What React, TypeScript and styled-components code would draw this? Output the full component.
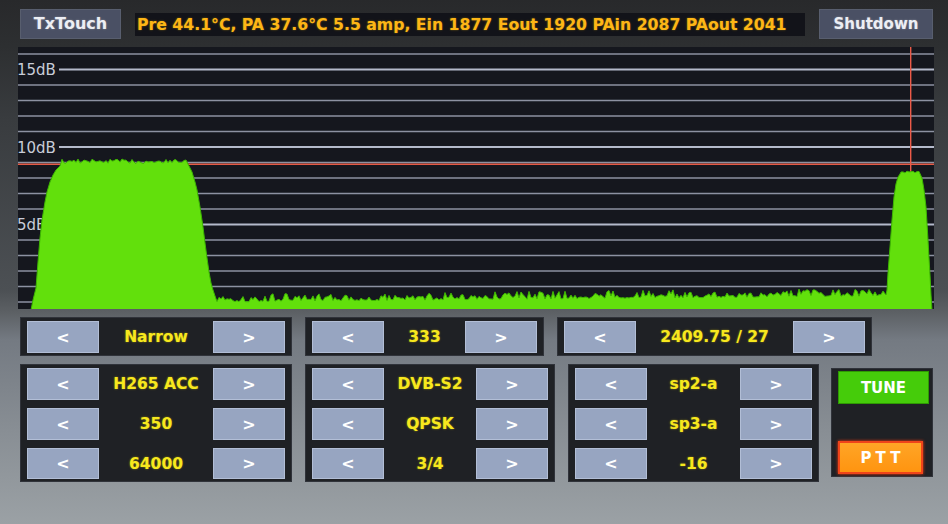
import React from 'react';
import styled, { createGlobalStyle } from 'styled-components';

const Global = createGlobalStyle`
  html, body { margin: 0; padding: 0; background: #2a2b2d; }
  #root { width: 948px; height: 524px; }
`;

const Screen = styled.div`
  width: 948px;
  height: 524px;
  overflow: hidden;
  display: flex;
  flex-direction: column;
  font-family: "DejaVu Sans", "Liberation Sans", sans-serif;
  background: linear-gradient(
    180deg,
    #28292b 0px,
    #2d2f31 46px,
    #393c3f 120px,
    #4c5054 290px,
    #5c6064 312px,
    #747a82 340px,
    #888e94 430px,
    #9ba1a5 524px
  );
`;

const TopBar = styled.div`
  height: 47px;
  display: flex;
  align-items: center;
  padding: 0 15px 0 20px;
  box-sizing: border-box;
`;

const HeaderButton = styled.div<{ $w: number; $fs: number }>`
  width: ${(p) => p.$w}px;
  height: 30px;
  box-sizing: border-box;
  display: flex;
  align-items: center;
  justify-content: center;
  background: #4a5064;
  border: 1px solid #585e6e;
  color: #eceef4;
  font-weight: bold;
  font-size: ${(p) => p.$fs}px;
  text-shadow: 0 0 2px rgba(255, 255, 255, 0.35);
`;

const Status = styled.div`
  width: 670px;
  height: 23px;
  margin: 2px 14px 0 14px;
  box-sizing: border-box;
  padding-left: 2px;
  display: flex;
  align-items: center;
  background: #121319;
  color: #fdb616;
  font-weight: bold;
  font-size: 15.7px;
  white-space: nowrap;
  text-shadow: 0 0 2px rgba(255, 200, 0, 0.45);
`;

const ChartBox = styled.div`
  margin: 0 14px 0 18px;
  height: 262px;
  background: #15171e;
  flex-shrink: 0;
`;

const Controls = styled.div`
  display: flex;
  flex-direction: column;
  gap: 8px;
  padding: 8px 0 0 20px;
`;

const Row = styled.div`
  display: flex;
  gap: 13px;
  align-items: flex-start;
`;

const Panel = styled.div<{ $w: number }>`
  width: ${(p) => p.$w}px;
  box-sizing: border-box;
  background: #1f2125;
  border: 1px solid #30333a;
  display: flex;
  flex-direction: column;
  gap: 8px;
  padding: 3px 6px 2px 6px;
`;

const ControlRow = styled.div<{ $h: number }>`
  display: grid;
  grid-template-columns: 72px 1fr 72px;
  height: ${(p) => p.$h}px;
`;

const ArrowButton = styled.div`
  box-sizing: border-box;
  display: flex;
  align-items: center;
  justify-content: center;
  background: #97a5c1;
  border: 1px solid #b2bed6;
  color: #ffffff;
  font-weight: bold;
  font-size: 16px;
`;

const Value = styled.div`
  display: flex;
  align-items: center;
  justify-content: center;
  color: #f7e81e;
  font-weight: bold;
  font-size: 15.5px;
  white-space: nowrap;
  text-shadow: 0 0 2px rgba(255, 235, 0, 0.5);
`;

const ActionPanel = styled.div`
  width: 102px;
  height: 109px;
  margin-top: 4px;
  margin-left: -1px;
  box-sizing: border-box;
  background: #1f2125;
  border: 1px solid #30333a;
  display: flex;
  flex-direction: column;
  justify-content: space-between;
  padding: 2px 4px 2px 6px;
`;

const TuneButton = styled.div`
  width: 91px;
  height: 33px;
  box-sizing: border-box;
  display: flex;
  align-items: center;
  justify-content: center;
  background: #45cc0a;
  border: 1px solid #2e9a02;
  color: #ffffff;
  font-weight: bold;
  font-size: 15px;
`;

const PttButton = styled.div`
  width: 85px;
  height: 33px;
  box-sizing: border-box;
  display: flex;
  align-items: center;
  justify-content: center;
  background: linear-gradient(180deg, #ffa526 0%, #ff9410 100%);
  border: 2px solid #f0441a;
  box-shadow: 0 0 3px #ff3a10;
  color: #ffffff;
  font-weight: bold;
  font-size: 15px;
  letter-spacing: 4px;
  padding-left: 4px;
`;

const rand = (i: number) => {
  const s = Math.sin(i * 12.9898 + 78.233) * 43758.5453;
  return s - Math.floor(s);
};

const OX = 18;
const OY = 47;

function buildSpectrum(): string {
  const pts: [number, number][] = [];
  pts.push([31, 310], [33, 300], [36, 288], [38, 262], [40, 238], [42, 220], [45, 202], [47, 192], [50, 182], [53, 175], [56, 170], [60, 166]);
  for (let x = 62; x <= 186; x += 2) {
    pts.push([x, 163.5 - rand(x) * 4.5]);
  }
  pts.push([189, 166], [192, 172], [195, 182], [197, 190], [200, 207], [203, 227], [205, 243], [207, 258], [209, 272], [211, 283], [213, 290], [215, 296]);
  for (let x = 217; x <= 884; x += 2) {
    const base = 302 - ((x - 217) / (884 - 217)) * 6;
    const r = rand(x + 1000);
    pts.push([x, base - r * r * 8 - (x % 4 === 0 ? 1 : 0)]);
  }
  pts.push([886, 295], [887, 290], [888, 273], [890, 247], [892, 220], [894, 197], [896, 184], [898, 177], [900, 174]);
  for (let x = 901; x <= 920; x += 2) {
    pts.push([x, 173.5 - rand(x + 500) * 3]);
  }
  pts.push([922, 178], [924, 190], [926, 207], [928, 240], [929, 258], [930, 275], [931, 295], [932, 310]);
  return (
    'M ' +
    pts.map(([x, y]) => `${(x - OX).toFixed(1)} ${(y - OY).toFixed(1)}`).join(' L ') +
    ' Z'
  );
}

const Spectrum: React.FC = () => {
  const lines = Array.from({ length: 17 }, (_, i) => 54 + 15.5 * i - OY);
  const labels: Record<number, string> = { 1: '15dB', 6: '10dB', 11: '5dB' };
  return (
    <svg width="916" height="262" viewBox="0 0 916 262">
      {lines.map((y, i) => {
        const lab = labels[i];
        return (
          <line
            key={i}
            x1={lab ? 41 : 0}
            x2={916}
            y1={y}
            y2={y}
            stroke={lab ? '#b4bacb' : '#8d92a2'}
            strokeWidth={lab ? 2 : 1.6}
          />
        );
      })}
      {Object.entries(labels).map(([i, t]) => (
        <text
          key={t}
          x={-1}
          y={54 + 15.5 * Number(i) - OY + 5.5}
          fill="#c8ccd8"
          fontFamily="DejaVu Sans, sans-serif"
          fontSize="15"
        >
          {t}
        </text>
      ))}
      <line x1={0} x2={916} y1={117.3} y2={117.3} stroke="#e65a46" strokeWidth={1.6} />
      <line x1={892.7} x2={892.7} y1={0} y2={128} stroke="#ec5a48" strokeWidth={1.4} />
      <path d={buildSpectrum()} fill="#62e00c" stroke="#3db502" strokeWidth={1} strokeLinejoin="round" />
    </svg>
  );
};

const Control: React.FC<{ value: string; h: number }> = ({ value, h }) => (
  <ControlRow $h={h}>
    <ArrowButton>&lt;</ArrowButton>
    <Value>{value}</Value>
    <ArrowButton>&gt;</ArrowButton>
  </ControlRow>
);

const StackPanel: React.FC<{ w: number; values: string[] }> = ({ w, values }) => (
  <Panel $w={w}>
    {values.map((v, i) => (
      <Control key={i} value={v} h={i === 2 ? 31 : 32} />
    ))}
  </Panel>
);

export default function App() {
  return (
    <>
      <Global />
      <Screen>
        <TopBar>
          <HeaderButton $w={101} $fs={16}>TxTouch</HeaderButton>
          <Status>Pre 44.1°C, PA 37.6°C 5.5 amp, Ein 1877 Eout 1920 PAin 2087 PAout 2041</Status>
          <HeaderButton $w={114} $fs={15}>Shutdown</HeaderButton>
        </TopBar>
        <ChartBox>
          <Spectrum />
        </ChartBox>
        <Controls>
          <Row>
            <Panel $w={272}>
              <Control value="Narrow" h={32} />
            </Panel>
            <Panel $w={239}>
              <Control value="333" h={32} />
            </Panel>
            <Panel $w={315}>
              <Control value="2409.75 / 27" h={32} />
            </Panel>
          </Row>
          <Row>
            <StackPanel w={272} values={['H265 ACC', '350', '64000']} />
            <StackPanel w={250} values={['DVB-S2', 'QPSK', '3/4']} />
            <StackPanel w={251} values={['sp2-a', 'sp3-a', '-16']} />
            <ActionPanel>
              <TuneButton>TUNE</TuneButton>
              <PttButton>PTT</PttButton>
            </ActionPanel>
          </Row>
        </Controls>
      </Screen>
    </>
  );
}
